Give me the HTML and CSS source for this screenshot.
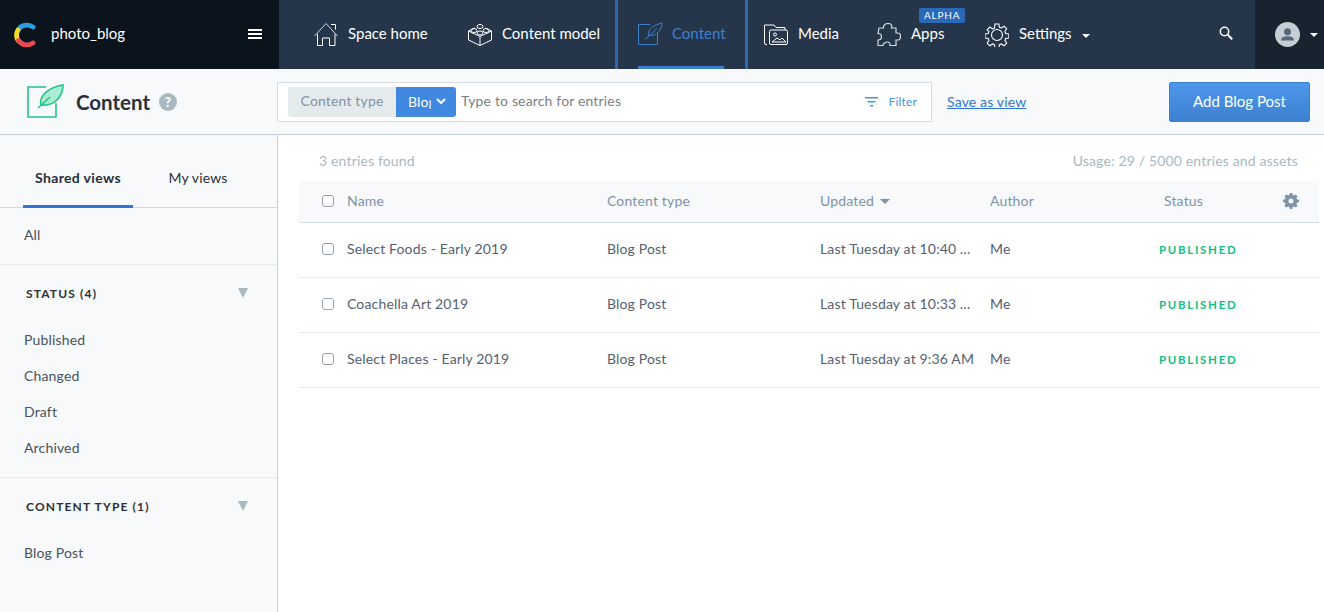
FILE: index.html
```html
<!DOCTYPE html>
<html lang="en">
<head>
    <meta charset="UTF-8">
    <title>Content - photo_blog</title>
    <link rel="stylesheet" href="styles.css">
</head>
<body>
    <nav class="topbar">
        <div class="space">
            <svg class="logo" width="22" height="26" viewBox="0 0 22 26" fill="none" stroke-width="4.800" stroke-linecap="round">
                <path d="M4.500 7.500C7 3.500 13 1.500 19 5" stroke="#2d9ee0"/>
                <path d="M4 8C2 11.500 2 15 4.200 18.500" stroke="#f5d82c"/>
                <path d="M4.500 18.500C8 23.500 14 24 19 21" stroke="#ea4a4f"/>
            </svg>
            <span class="space-name">photo_blog</span>
            <span class="burger"><i></i><i></i><i></i></span>
        </div>
        <div class="nav-items">
            <a class="nav-item item-home">
                <svg width="24" height="24" viewBox="0 0 24 24" fill="none" stroke="#fff" stroke-width="1">
                    <path d="M.5 13 12 .5 23.500 13" stroke="#cfd5da"/>
                    <path d="M17 1.500h4.500v5M3.500 11v11.500h5V15h7v7.500H21V11"/>
                </svg>
                <span class="nav-label">Space home</span>
            </a>
            <a class="nav-item item-model">
                <svg width="24" height="24" viewBox="0 0 24 24" fill="none" stroke="#fff" stroke-width="1">
                    <path d="M.5 8 12 13.500 23.500 8v9L12 22.500.5 17zM12 13.500v9M.5 8 7 5M23.500 8 17 5"/>
                    <ellipse cx="12" cy="3.500" rx="3" ry="2"/>
                    <ellipse cx="6" cy="7.500" rx="3" ry="2"/>
                    <ellipse cx="18" cy="7.500" rx="3" ry="2"/>
                    <ellipse cx="12" cy="10" rx="3" ry="2"/>
                </svg>
                <span class="nav-label">Content model</span>
            </a>
            <a class="nav-item item-content">
                <svg width="25" height="25" viewBox="0 0 25 25" fill="none" stroke="#3c80cf" stroke-width="1">
                    <path d="M12 2.500H.5v20h19V11"/>
                    <path d="M7 17.500 19 6.500M10.500 13.500C9.500 7 16 3 24 1c-.5 7-5 13.500-13.500 12.500"/>
                </svg>
                <span class="nav-label">Content</span>
            </a>
            <a class="nav-item item-media">
                <svg width="24" height="22" viewBox="0 0 24 22" fill="none" stroke="#fff" stroke-width="1">
                    <path d="M3 20.500H2A1.500 1.500 0 0 1 .5 19V1H10l2 2.500h9V6"/>
                    <rect x="5.500" y="6" width="18" height="14.500" rx="1.500"/>
                    <circle cx="11" cy="10.500" r="1.500"/>
                    <path d="m8 18 5-4 3 2 2-2 4 4z"/>
                </svg>
                <span class="nav-label">Media</span>
            </a>
            <a class="nav-item item-apps">
                <svg width="24" height="24" viewBox="0 0 24 24" fill="none" stroke="#d5dbe0" stroke-width="1.200">
                    <path d="M2 5h4.500C6 2.500 8 .5 11 .5s4.500 2 3.500 4.500H19v5h2c1.500 0 2.500 1.500 2.500 3.500S22.500 17 21 17h-2v5.500h-6c0-2-.5-3.500-2.500-3.500S6 20.500 6 22.500H1V17c2 0 3.500-1 3.500-3S3 10.500 1 10.500z"/>
                </svg>
                <span class="nav-label">Apps</span>
                <span class="alpha">ALPHA</span>
            </a>
            <a class="nav-item item-settings">
                <svg width="24" height="24" viewBox="0 0 24 24" fill="none" stroke="#fff" stroke-width="1.100">
                    <circle cx="12" cy="12" r="5.500"/>
                    <path d="M10 .5h4l.6 3.300 2 .8 2.800-1.900 2.800 2.800-1.900 2.800.8 2 3.300.6v4l-3.300.6-.8 2 1.900 2.800-2.800 2.800-2.800-1.900-2 .8-.6 3.300h-4l-.6-3.300-2-.8-2.800 1.900-2.800-2.800 1.900-2.800-.8-2-3.300-.6v-4l3.300-.6.800-2L1.800 6.400l2.800-2.800 2.800 1.900 2-.8z" transform="translate(.4 .6) scale(.96)"/>
                </svg>
                <span class="nav-label">Settings</span>
                <span class="caret"></span>
            </a>
            <svg class="search-icon" width="14" height="14" viewBox="0 0 14 14" fill="none" stroke="#fff">
                <circle cx="5.500" cy="5.500" r="4.200" stroke-width="1.500"/>
                <path d="m8.800 8.800 4.400 4.400" stroke-width="2"/>
            </svg>
        </div>
        <div class="account">
            <svg width="25" height="25" viewBox="0 0 25 25">
                <circle cx="12.500" cy="12.500" r="12.500" fill="#c5ced3"/>
                <circle cx="12.500" cy="9.800" r="3.500" fill="#56677a"/>
                <path d="M6 18.500c0-3 3-4.300 6.500-4.300s6.500 1.300 6.500 4.300z" fill="#56677a"/>
            </svg>
            <span class="caret"></span>
        </div>
    </nav>

    <header class="subbar">
        <div class="page-title">
            <svg width="37" height="35" viewBox="0 0 37 35" fill="none" stroke="#21c48d" stroke-width="1.600">
                <path d="M19 3H1v30h28V19"/>
                <path d="M14 21C11.500 12 22 3 36 1c0 9-6 21.500-22 20z" fill="#a9eed3"/>
                <path d="m11 24 12-11"/>
            </svg>
            <h1>Content</h1>
            <span class="help">?</span>
        </div>
        <div class="search-box">
            <div class="type-pill">
                <span class="type-label">Content type</span>
                <span class="type-value">
                    <span class="type-clip">Blog Post</span>
                    <svg width="10" height="7" viewBox="0 0 10 7" fill="none" stroke="#fff" stroke-width="2"><path d="m1 1 4 4 4-4"/></svg>
                </span>
            </div>
            <span class="search-text">Type to search for entries</span>
            <svg class="filter-icon" width="13" height="10" viewBox="0 0 13 10" fill="#4a90e2">
                <rect width="13" height="1.500"/>
                <rect x="2.500" y="4" width="8" height="1.500"/>
                <rect x="5" y="8" width="3" height="1.500"/>
            </svg>
            <span class="filter-text">Filter</span>
        </div>
        <a class="save-view">Save as view</a>
        <button class="add-btn">Add Blog Post</button>
    </header>

    <div class="layout">
        <aside class="sidebar">
            <div class="tabs">
                <span class="tab tab-active">Shared views</span>
                <span class="tab">My views</span>
            </div>
            <section class="side-block block-all">
                <a class="side-link">All</a>
            </section>
            <section class="side-block">
                <h3 class="side-title">STATUS (4) <span class="side-arrow"></span></h3>
                <a class="side-link">Published</a>
                <a class="side-link">Changed</a>
                <a class="side-link">Draft</a>
                <a class="side-link">Archived</a>
            </section>
            <section class="side-block block-last">
                <h3 class="side-title">CONTENT TYPE (1) <span class="side-arrow"></span></h3>
                <a class="side-link">Blog Post</a>
            </section>
        </aside>

        <main class="main">
            <div class="summary">
                <span>3 entries found</span>
                <span>Usage: 29 / 5000 entries and assets</span>
            </div>
            <table class="entries">
                <colgroup>
                    <col class="col-check"><col class="col-name"><col class="col-type">
                    <col class="col-updated"><col class="col-author"><col class="col-status">
                </colgroup>
                <thead>
                    <tr>
                        <th><span class="check check-head"></span></th>
                        <th>Name</th>
                        <th>Content type</th>
                        <th>Updated <span class="sort-caret"></span></th>
                        <th>Author</th>
                        <th class="th-status">Status
                            <svg class="gear" width="16" height="16" viewBox="0 0 16 16" fill="#7f93a8">
                                <path fill-rule="evenodd" d="M6.700 0h2.600l.4 2.100 1.200.5L12.700 1.400l1.900 1.900-1.200 1.800.5 1.200 2.100.4v2.600l-2.100.4-.5 1.200 1.200 1.800-1.900 1.900-1.800-1.200-1.200.5-.4 2.100H6.700l-.4-2.100-1.200-.5-1.800 1.200-1.900-1.900 1.200-1.800-.5-1.200L0 9.300V6.700l2.100-.4.5-1.200-1.200-1.800 1.900-1.900 1.800 1.200 1.200-.5zM8 5.500a2.500 2.500 0 1 0 0 5 2.500 2.500 0 0 0 0-5z"/>
                            </svg>
                        </th>
                    </tr>
                </thead>
                <tbody>
                    <tr>
                        <td><span class="check"></span></td>
                        <td>Select Foods - Early 2019</td>
                        <td>Blog Post</td>
                        <td><span class="updated">Last Tuesday at 10:40 AM</span></td>
                        <td>Me</td>
                        <td><span class="published">PUBLISHED</span></td>
                    </tr>
                    <tr>
                        <td><span class="check"></span></td>
                        <td>Coachella Art 2019</td>
                        <td>Blog Post</td>
                        <td><span class="updated">Last Tuesday at 10:33 AM</span></td>
                        <td>Me</td>
                        <td><span class="published">PUBLISHED</span></td>
                    </tr>
                    <tr>
                        <td><span class="check"></span></td>
                        <td>Select Places - Early 2019</td>
                        <td>Blog Post</td>
                        <td><span class="updated">Last Tuesday at 9:36 AM</span></td>
                        <td>Me</td>
                        <td><span class="published">PUBLISHED</span></td>
                    </tr>
                </tbody>
            </table>
        </main>
    </div>
</body>
</html>
```

FILE: styles.css
```css
* {
    box-sizing: border-box;
}
html, body {
    height: 100%;
}
body {
    margin: 0;
    font-family: Lato, "Open Sans", sans-serif;
    font-size: 14px;
    letter-spacing: .16px;
    color: #536171;
    background-color: #fff;
    overflow: hidden;
}
svg {
    display: block;
    flex: none;
}

/* top navigation */
.topbar {
    display: flex;
    height: 69px;
    letter-spacing: 0;
    background-color: #25364a;
    color: #fff;
}
.space {
    display: flex;
    align-items: center;
    width: 279px;
    padding: 0 17px 0 14px;
    background-color: #0b131c;
}
.space-name {
    margin-left: 15px;
    padding-bottom: 4px;
    font-size: 15px;
}
.burger {
    display: flex;
    flex-direction: column;
    gap: 2px;
    margin-left: auto;
    margin-bottom: 2px;
}
.burger i {
    display: block;
    width: 14px;
    height: 2px;
    background-color: #fff;
}
.nav-items {
    display: flex;
    flex: 1;
    align-items: stretch;
    padding-left: 35px;
}
.nav-item {
    position: relative;
    display: flex;
    align-items: center;
    gap: 10px;
    font-size: 15px;
}
.nav-label {
    padding-bottom: 4px;
}
.item-home {
    width: 154px;
}
.item-model {
    width: 147px;
}
.item-content {
    width: 133px;
    padding-left: 20px;
    gap: 9px;
    color: #3c80cf;
    border-left: 3px solid #2b68ad;
    border-right: 3px solid #2b68ad;
}
.item-content::after {
    content: "";
    position: absolute;
    left: 20px;
    bottom: 0;
    width: 86px;
    height: 3px;
    background-color: #3c80cf;
}
.item-media {
    width: 129px;
    padding-left: 16px;
}
.item-apps {
    width: 108px;
}
.item-settings {
    width: 234px;
}
.alpha {
    position: absolute;
    left: 42px;
    top: 8px;
    padding: 0 5px;
    height: 15px;
    line-height: 15px;
    font-size: 10px;
    letter-spacing: .8px;
    background-color: #2a68b8;
    border-radius: 2px;
}
.caret {
    width: 0;
    height: 0;
    border-left: 4px solid transparent;
    border-right: 4px solid transparent;
    border-top: 4px solid #fff;
}
.item-settings .caret {
    margin-top: 2px;
}
.search-icon {
    align-self: center;
    margin-bottom: 4px;
}
.account {
    display: flex;
    align-items: center;
    gap: 10px;
    width: 69px;
    padding-left: 20px;
    background-color: #17242f;
}

/* page title row */
.subbar {
    display: flex;
    align-items: center;
    height: 66px;
    padding: 0 14px 0 27px;
    background-color: #f7f9fa;
    border-bottom: 1px solid #c3cfd5;
}
.page-title {
    display: flex;
    align-items: center;
    width: 250px;
}
.page-title h1 {
    margin: 0 9px 0 12px;
    font-size: 20.500px;
    font-weight: 700;
    letter-spacing: 0;
    color: #2a3039;
}
.help {
    width: 18px;
    height: 18px;
    line-height: 18px;
    text-align: center;
    font-size: 14px;
    font-weight: 900;
    color: #f7f9fa;
    background-color: #a9b9c0;
    border-radius: 50%;
}
.search-box {
    display: flex;
    align-items: center;
    width: 655px;
    height: 40px;
    padding: 0 14px 0 10px;
    background-color: #fff;
    border: 1px solid #d3dce0;
}
.type-pill {
    display: flex;
    height: 30px;
    line-height: 28px;
    border-radius: 3px;
    overflow: hidden;
}
.type-label {
    width: 108px;
    text-align: center;
    color: #7f93a8;
    background-color: #e5ebed;
}
.type-value {
    display: flex;
    align-items: center;
    width: 60px;
    padding-left: 12px;
    color: #fff;
    background-color: #4088e0;
}
.type-clip {
    width: 23px;
    margin-right: 5px;
    overflow: hidden;
    white-space: nowrap;
}
.search-text {
    margin-left: 5px;
    padding-bottom: 2px;
    color: #7a7f85;
}
.filter-icon {
    margin-left: auto;
}
.filter-text {
    margin-left: 11px;
    font-size: 12px;
    color: #4a90e2;
}
.save-view {
    margin-left: 15px;
    padding-bottom: 1px;
    color: #2e75d4;
    text-decoration: underline;
}
.add-btn {
    width: 141px;
    height: 40px;
    margin-left: auto;
    font-family: inherit;
    font-size: 15px;
    padding-bottom: 3px;
    color: #fff;
    background-image: linear-gradient(#4f97ec, #3c80cf);
    border: 1px solid #3c80cf;
    border-radius: 2px;
}

/* sidebar */
.layout {
    display: flex;
    height: calc(100% - 135px);
}
.sidebar {
    flex: none;
    width: 278px;
    background-color: #f7f9fa;
    border-right: 1px solid #c3cfd5;
}
.tabs {
    display: flex;
    height: 73px;
    padding: 0 0 0 23px;
    border-bottom: 1px solid #d3dce0;
}
.tab {
    display: flex;
    align-items: center;
    justify-content: center;
    width: 110px;
    padding-top: 14px;
    margin-bottom: -1px;
    color: #2a3039;
    border-bottom: 3px solid transparent;
}
.tab + .tab {
    margin-left: 10px;
    width: 110px;
}
.tab-active {
    font-weight: 700;
    letter-spacing: .35px;
    border-bottom-color: #2e75d4;
}
.side-block {
    padding: 0 24px;
    border-bottom: 1px solid #e5ebed;
}
.block-all {
    height: 57px;
    padding-top: 9px;
}
.block-last {
    border-bottom: none;
}
.side-title {
    position: relative;
    display: flex;
    align-items: center;
    margin: 0;
    padding: 0 0 1px 2px;
    height: 57px;
    font-size: 12px;
    font-weight: 700;
    letter-spacing: 1.150px;
    color: #2a3039;
}
.side-arrow {
    position: absolute;
    right: 5px;
    top: 23px;
    border-left: 5px solid transparent;
    border-right: 5px solid transparent;
    border-top: 10px solid #a9b9c0;
}
.side-link {
    display: block;
    height: 36px;
    line-height: 36px;
    color: #47525f;
}
.side-block:not(.block-all):not(.block-last) {
    padding-bottom: 11px;
}

/* entries */
.main {
    flex: 1;
    padding: 0 5px 0 21px;
}
.summary {
    display: flex;
    justify-content: space-between;
    align-items: center;
    height: 46px;
    padding: 5px 21px 0 20px;
    color: #a9b9c0;
}
.entries {
    width: 1020px;
    table-layout: fixed;
    border-collapse: collapse;
}
.col-check {
    width: 48px;
}
.col-name {
    width: 260px;
}
.col-type {
    width: 213px;
}
.col-updated {
    width: 170px;
}
.col-author {
    width: 169px;
}
.entries th {
    height: 41px;
    padding: 0 0 2px;
    text-align: left;
    font-weight: 400;
    color: #7f93a8;
    background-color: #f7f9fa;
    border-bottom: 1px solid #d3dce0;
}
.entries .th-status {
    position: relative;
    padding-left: 5px;
}
.gear {
    position: absolute;
    right: 20px;
    top: 12px;
}
.entries td {
    height: 55px;
    padding: 0 0 2px;
    color: #536171;
    border-bottom: 1px solid #e5ebed;
}
.check {
    display: block;
    width: 12px;
    height: 12px;
    margin: 0 0 0 23px;
    background-color: #fff;
    border: 1px solid #9aa3ab;
    border-radius: 3px;
}
.check-head {
    margin: 2px 0 0 23px;
}
.sort-caret {
    display: inline-block;
    margin: 0 0 2px 2px;
    border-left: 5px solid transparent;
    border-right: 5px solid transparent;
    border-top: 5px solid #7f93a8;
}
.updated {
    display: block;
    width: 156px;
    overflow: hidden;
    white-space: nowrap;
    text-overflow: ellipsis;
}
.published {
    font-size: 11.500px;
    font-weight: 700;
    letter-spacing: 1.700px;
    color: #14bf84;
}
```
